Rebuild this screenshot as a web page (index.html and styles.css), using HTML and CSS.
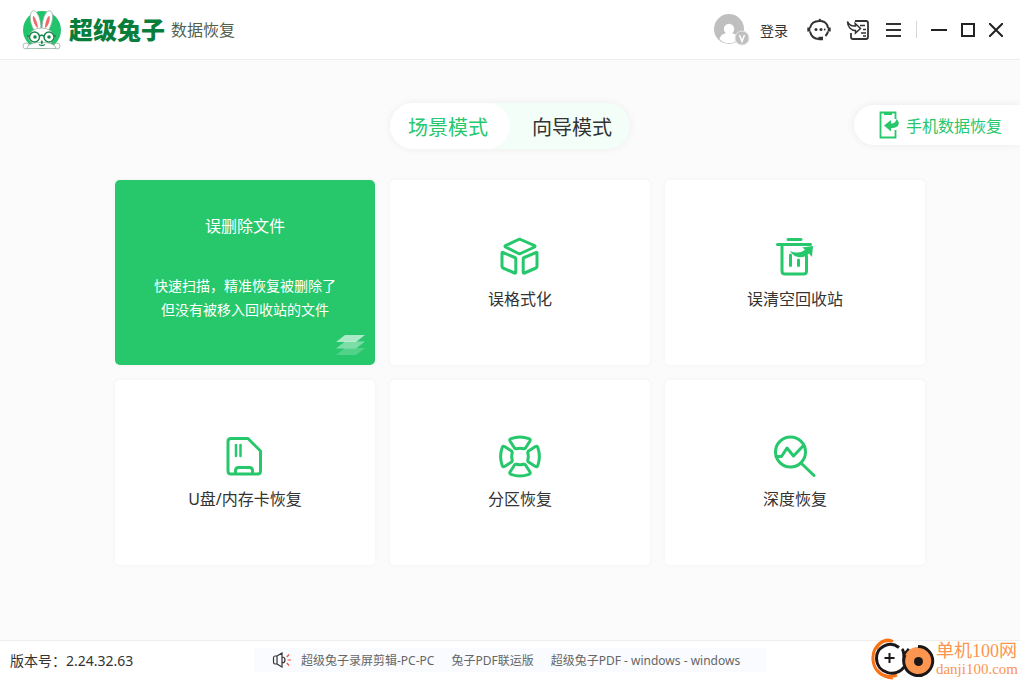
FILE: index.html
```html
<!DOCTYPE html>
<html lang="zh-CN">
<head>
<meta charset="utf-8">
<title>超级兔子数据恢复</title>
<link rel="stylesheet" href="styles.css">
</head>
<body>
<header class="topbar">
  <div class="brand">
    <svg class="brand-logo" width="40" height="40" viewBox="0 0 40 40" aria-hidden="true">
      <circle cx="20" cy="20" r="19" fill="#1fc46b"/>
      <g fill="#fff" stroke="#8ba795" stroke-width=".7">
        <path d="M14 23C9 17 7 8 9 3c1-3 4-3 6 0 3 4 4 11 4 17zM20 20c0-7 1-13 4-17 2-3 5-3 6 0 2 5-1 14-5 20z"/>
        <ellipse cx="19.500" cy="27" rx="13" ry="9"/>
        <circle cx="4" cy="36" r="3"/><circle cx="35" cy="36" r="3"/>
        <path d="M5 38.500c1-5 7-6 14.500-6s13 1 14.500 6z"/>
      </g>
      <path d="M11 6c2 0 5 8 5 12-3-1-6-9-5-12zM27.500 6c1 3-1 11-4.500 12 0-4 2-12 4.500-12z" fill="#ef6b6b"/>
      <g fill="none" stroke="#14874a" stroke-width="1.500"><circle cx="12.500" cy="27" r="5"/><circle cx="27" cy="27" r="5"/><path d="M17.500 26q2-1.500 4.500 0M19.800 32v2M17 34.500q3 2 6 0M7.500 26H5M32 26h2"/></g>
      <circle cx="13" cy="27" r="1.800" fill="#14874a"/><circle cx="27" cy="27" r="1.800" fill="#14874a"/>
      <circle cx="19.800" cy="31.500" r="1" fill="#14874a"/>
    </svg>
    <span class="brand-name">超级兔子</span>
    <span class="brand-sub">数据恢复</span>
  </div>
  <nav class="tools">
    <button class="login" type="button">
      <svg width="36" height="32" viewBox="0 0 36 32" aria-hidden="true">
        <circle cx="15" cy="15" r="15" fill="#bfbfbf"/>
        <circle cx="15" cy="15" r="5.200" fill="#fff"/>
        <path d="M5.500 25c1-4.500 5-6 9.500-6s8.500 1.500 9.500 6q-4 4.300-9.500 4.300T5.500 25z" fill="#fff"/>
        <circle cx="28" cy="24" r="7" fill="#bfbfbf" stroke="#e6e6e6"/>
        <path d="M25.500 21l2.500 6.500 2.500-6.500" fill="none" stroke="#fff" stroke-width="1.500"/>
      </svg>
      <span>登录</span>
    </button>
    <button class="tool" type="button" aria-label="客服">
      <svg width="24" height="24" viewBox="0 0 24 24" fill="none" stroke="#333" stroke-width="2">
        <path d="M3 10C4 5 8 2.500 14 3L12 1.300M14 3c4 .5 6.500 3 7 7M3 13.500c1 4.500 4 7.500 9 7.500M21 13.500c-.5 2-1 3-2.500 4.500"/>
        <path d="M1.800 9.500v4M22.200 9.500v4" stroke-width="3"/>
        <path d="M11.500 20.500h4.500" stroke-width="3.500"/>
        <g fill="#333" stroke="none"><circle cx="9" cy="11.500" r="1.500"/><circle cx="14" cy="11.500" r="1.500"/><circle cx="17.700" cy="11.500" r=".9"/></g>
      </svg>
    </button>
    <button class="tool" type="button" aria-label="反馈">
      <svg width="24" height="24" viewBox="0 0 24 24" fill="none" stroke="#333" stroke-width="1.500">
        <path d="M9 3h11q2 0 2 2v14q0 2-2 2H7q-2 0-2-2v-4" stroke-width="1.800"/>
        <path d="M1.500 3.500c1.500 3.500 4 5 8 4.500l-.3-2.500 5.300 5-5 4.500v-2.500C5 12.500 1.500 9 1.500 3.500z"/>
        <path d="M14 7.500h5M17 11.500h3M15 15h5M17 18h3"/>
      </svg>
    </button>
    <button class="tool tool-menu" type="button" aria-label="菜单">
      <svg width="16" height="16" viewBox="0 0 16 16" stroke="#333" stroke-width="2"><path d="M0 2h15M0 8h15M0 14h15"/></svg>
    </button>
    <span class="divider"></span>
    <button class="win" type="button" aria-label="最小化">
      <svg width="16" height="16" viewBox="0 0 16 16" stroke="#222" stroke-width="2"><path d="M0 8h16"/></svg>
    </button>
    <button class="win" type="button" aria-label="最大化">
      <svg width="14" height="14" viewBox="0 0 14 14" fill="none" stroke="#222" stroke-width="2"><path d="M1 1h12v12H1z"/></svg>
    </button>
    <button class="win" type="button" aria-label="关闭">
      <svg width="14" height="14" viewBox="0 0 14 14" stroke="#222" stroke-width="2"><path d="M0 0l14 14M14 0L0 14"/></svg>
    </button>
  </nav>
</header>

<main class="main">
  <div class="modes">
    <div class="switch">
      <button class="mode mode-on" type="button">场景模式</button>
      <button class="mode" type="button">向导模式</button>
    </div>
    <button class="phone" type="button">
      <svg width="22" height="28" viewBox="0 0 22 28" aria-hidden="true">
        <path d="M16.500 8V1.500H1.500v25h15V19" fill="none" stroke="#27c76c" stroke-width="1.800"/>
        <path d="M5 1h8v3H5z" fill="#27c76c"/>
        <path d="M5 14.500l7-5.500v3.500c3 0 5-1 5-4.500 5 3 3.500 9.500-5 9v3.500z" fill="#27c76c"/>
      </svg>
      <span>手机数据恢复</span>
    </button>
  </div>

  <section class="cards">
    <button class="card card-on" type="button">
      <span class="card-title">误删除文件</span>
      <span class="card-desc">快速扫描，精准恢复被删除了<br>但没有被移入回收站的文件</span>
      <svg class="layers" width="30" height="22" viewBox="0 0 30 22" fill="#fff" aria-hidden="true">
        <path d="M9 14h20l-9 7H0z" opacity=".2"/><path d="M9 7.500h20l-9 7H0z" opacity=".4"/><path d="M9 1h20l-9 7H0z" opacity=".62"/>
      </svg>
    </button>
    <button class="card" type="button">
      <svg width="44" height="44" viewBox="0 0 44 44" class="line">
        <path d="M22.600 4.500l14 6.200q1 .6 0 1.300l-14 6.500q-1 .4-2 0L7.400 12q-1-.7 0-1.300L20.600 4.500q1-.4 2 0zM4.800 17.500l12 5q1 .4 1 1.500v13q0 1.500-1.300 1l-11.500-5q-1-.5-1-1.500V18.500q0-1.400.8-1zM38.200 17.500l-12 5q-1 .4-1 1.500v13q0 1.500 1.300 1l11.500-5q1-.5 1-1.500V18.500q0-1.400-.8-1z"/>
      </svg>
      <span class="card-title">误格式化</span>
    </button>
    <button class="card" type="button">
      <svg width="44" height="44" viewBox="0 0 44 44" class="line">
        <path d="M15 4.500h13M4.500 9.500h33M9 10v26q0 3 3 3h18.500q3 0 3-3V21M17.500 20v10.500M25.500 25v5.500"/>
        <path d="M17 16c6 2.500 12 2 15-1.500l-3-2 11-1.500-1 11-3-3.500c-5 5.500-15 5-19-2.500z" fill="#27c76c" stroke="none"/>
      </svg>
      <span class="card-title">误清空回收站</span>
    </button>
    <button class="card" type="button">
      <svg width="44" height="44" viewBox="0 0 44 44" class="line">
        <path d="M8 3.500h17L37.500 16v20q0 3-3 3H8q-3 0-3-3V6.500q0-3 3-3zM12.500 38v-2q0-3.500 3-3.500h11q3 0 3 3.500v2"/>
        <path d="M13 10v11M17.500 10v11" stroke-width="2.500"/>
      </svg>
      <span class="card-title">U盘/内存卡恢复</span>
    </button>
    <button class="card" type="button">
      <svg width="44" height="44" viewBox="0 0 44 44" class="line">
        <path id="petal" d="M16.500 13.500L12 6.500q-.8-1.800 1-2.300Q22 1 31 4.200q1.800.5 1 2.300L27.500 13.500q-.8 1-2 .7-3.500-1-7 0-1.200.3-2-.7z" transform="translate(0 -.5)"/>
        <use href="#petal" transform="rotate(90 22 21.500)"/>
        <use href="#petal" transform="rotate(180 22 21.500)"/>
        <use href="#petal" transform="rotate(270 22 21.500)"/>
      </svg>
      <span class="card-title">分区恢复</span>
    </button>
    <button class="card" type="button">
      <svg width="44" height="44" viewBox="0 0 44 44" class="line">
        <circle cx="17.500" cy="17" r="15"/>
        <path d="M3 21.500h5.500L14 13l6.500 8 9.500-10M29 29l12 11.500"/>
      </svg>
      <span class="card-title">深度恢复</span>
    </button>
  </section>
</main>

<footer class="footer">
  <span class="version">版本号：2.24.32.63</span>
  <div class="notice">
    <svg width="20" height="16" viewBox="0 0 20 16" fill="none" stroke="#333" stroke-width="1.200" aria-hidden="true">
      <path d="M5 4H3Q1.500 4 1.500 6v4q0 2 1.500 2h2zM5 4l5-3v14l-5-3M10 5q3 0 3 3t-3 3"/>
      <path d="M14.800 5L17 2.500M15.500 8H19M14.800 11l2.200 2.500" stroke="#f0503c"/>
    </svg>
    <a href="#">超级兔子录屏剪辑-PC-PC</a>
    <a href="#">兔子PDF联运版</a>
    <a href="#">超级兔子PDF - windows - windows</a>
  </div>
  <div class="mark">
    <svg width="64" height="42" viewBox="0 0 64 42" fill="none" aria-hidden="true">
      <path d="M22 3.500C14-1 1 7 2 22c1 11 9 17 20 18M5 11C9 4 13 2 21 3M6 32c5 6 12 8 20 5" stroke="#f97316" stroke-width="3"/>
      <path d="M28 9.500C18 2 5 9.500 5.500 20.500c.5 15 20 20 28 8" stroke="#1d1719" stroke-width="3"/>
      <path d="M31 11c3 3 1 9 3 14M33 17l5-6" stroke="#1d1719" stroke-width="3"/>
      <circle cx="47" cy="23" r="14" fill="#fb9550"/>
      <path d="M47 8.500A14.500 14.500 0 1 1 34 17" stroke="#1d1719" stroke-width="3"/>
      <circle cx="47.500" cy="23.500" r="4.500" fill="#1d1719"/>
      <path d="M18.500 15v10M13.500 20h10" stroke="#1d1719" stroke-width="2"/>
    </svg>
    <div class="mark-text"><span class="mark-name">单机100网</span><span class="mark-url">danji100.com</span></div>
  </div>
</footer>
</body>
</html>
```
FILE: styles.css
```css
* { box-sizing: border-box; }

body {
  margin: 0;
  min-height: 100vh;
  display: flex;
  flex-direction: column;
  background: #fbfbfb;
  color: #333;
  font-family: "Noto Sans", "Noto Sans CJK SC", sans-serif;
  font-size: 14px;
}

button {
  margin: 0;
  padding: 0;
  border: 0;
  background: none;
  color: inherit;
  font: inherit;
  cursor: pointer;
}

svg { display: block; flex: none; }

.topbar {
  display: flex;
  align-items: center;
  justify-content: space-between;
  height: 60px;
  padding: 0 17px 0 22px;
  background: #fff;
  border-bottom: 1px solid #eee;
}

.brand { display: flex; align-items: center; }
.brand-name {
  margin-left: 7px;
  color: #087d3c;
  font-size: 24px;
  font-weight: 900;
  line-height: 32px;
}
.brand-sub {
  margin-left: 6px;
  color: #52604f;
  font-size: 16px;
  line-height: 32px;
}

.tools { display: flex; align-items: center; }
.login { display: flex; align-items: center; gap: 10px; }
.tool { margin-left: 15px; }
.login + .tool { margin-left: 19px; }
.tool-menu { margin-left: 16px; }
.divider {
  width: 1px;
  height: 17px;
  margin-left: 14px;
  background: #d8d8d8;
}
.win { margin-left: 14px; }

.main { flex: 1; padding-top: 43px; }

.modes {
  display: grid;
  grid-template-columns: 1fr auto 1fr;
  align-items: center;
}
.switch {
  grid-column: 2;
  display: flex;
  border-radius: 23px;
  background: #f3fef8;
  box-shadow: 0 0 8px rgba(0, 0, 0, 0.06);
}
.mode {
  width: 120px;
  height: 46px;
  padding-right: 4px;
  border-radius: 23px;
  font-size: 20px;
}
.mode + .mode { padding: 0 0 0 4px; }
.mode-on { background: #fff; color: #27c76c; }

.phone {
  justify-self: end;
  display: flex;
  align-items: center;
  gap: 5px;
  height: 40px;
  margin-bottom: 2px;
  padding: 0 18px 0 25px;
  border-radius: 20px 0 0 20px;
  background: #fff;
  box-shadow: 0 0 8px rgba(0, 0, 0, 0.07);
  color: #27c76c;
  font-size: 16px;
}

.cards {
  display: grid;
  grid-template-columns: repeat(3, 1fr);
  grid-auto-rows: 185px;
  gap: 15px;
  padding: 31px 95px 40px 115px;
}
.card {
  position: relative;
  display: flex;
  flex-direction: column;
  align-items: center;
  gap: 8px;
  padding-top: 55px;
  border-radius: 5px;
  background: #fff;
  box-shadow: 0 0 5px rgba(0, 0, 0, 0.04);
}
.card-title { font-size: 16px; line-height: 24px; }
.card-on {
  gap: 36px;
  padding-top: 34px;
  background: #27c76c;
  color: #fff;
}
.card-desc { font-size: 14px; line-height: 24px; }
.layers { position: absolute; right: 9px; bottom: 9px; }
.line {
  fill: none;
  stroke: #27c76c;
  stroke-width: 3;
  stroke-linecap: round;
  stroke-linejoin: round;
}

.footer {
  position: relative;
  display: flex;
  align-items: center;
  height: 40px;
  padding: 0 10px 2px;
  background: #fff;
  border-top: 1px solid #eee;
}
.version { flex: 0 0 244px; }
.notice {
  display: flex;
  align-items: center;
  gap: 17px;
  height: 24px;
  padding: 0 26px 0 18px;
  background: #f9fbfe;
  font-size: 12px;
}
.notice a { color: #666; text-decoration: none; }
.notice svg { margin-right: -8px; }

.mark {
  position: absolute;
  right: 2px;
  bottom: 0;
  display: flex;
  align-items: center;
  gap: 1px;
  color: #fb9550;
}
.mark-text { display: flex; flex-direction: column; }
.mark-name { font-size: 18px; line-height: 20px; font-family: "Liberation Serif", "Noto Sans CJK SC", serif; }
.mark-url { font-size: 15px; line-height: 17px; font-family: "Liberation Serif", serif; }
```
